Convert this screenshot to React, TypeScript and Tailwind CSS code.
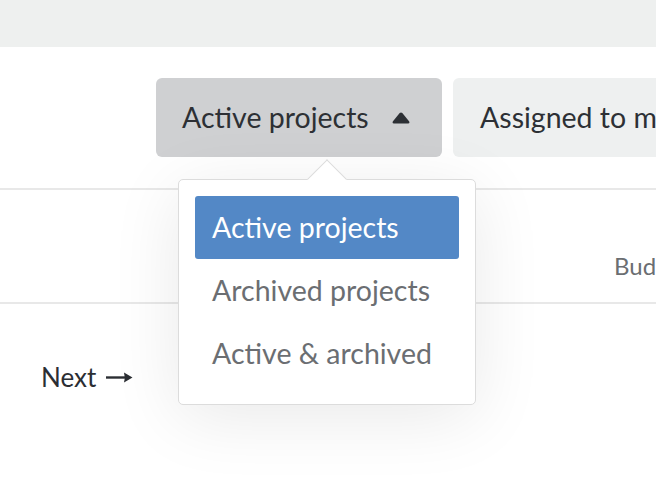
const font = { fontFamily: 'Lato, "Open Sans", sans-serif' }

const options = ['Active projects', 'Archived projects', 'Active & archived']

const App = () => {
  return (
    <div className="relative h-[494px] w-[656px] overflow-hidden bg-white" style={font}>
      <div className="h-[47px] bg-[#eef0ef]" />

      {/* filter toolbar */}
      <div className="flex gap-[11px] whitespace-nowrap pl-[156px] pt-[31px]">
        <button className="flex h-[79px] w-[286px] shrink-0 items-center rounded-[6px] bg-[#cfd0d2] pl-[26px] text-[28.5px] leading-none text-[#2d3035]">
          <span>Active projects</span>
          <svg className="ml-[23px]" width="18" height="12" viewBox="0 0 18 12">
            <path d="M7.7 1.1 Q9 -0.2 10.3 1.1 L17.2 9.6 Q18 11.5 16 11.5 H2 Q0 11.5 0.8 9.6 Z" fill="#2d3035" />
          </svg>
        </button>
        <button className="flex h-[79px] w-[300px] shrink-0 items-center rounded-[6px] bg-[#eef0f0] pl-[27px] text-[28.5px] leading-none text-[#2d3035]">
          Assigned to me
        </button>
      </div>

      {/* table header */}
      <div className="mt-[31px] flex h-[116px] items-end border-y-2 border-[#e8e8e8] pb-[18px] pl-[614px]">
        <span className="whitespace-nowrap text-[24px] text-[#6b6e72]">Budget</span>
      </div>

      <div className="flex items-center gap-[10px] pl-[41px] pt-[54px] text-[26px] text-[#2b2e33]">
        <span>Next</span>
        <svg width="27" height="11" viewBox="0 0 27 11">
          <path d="M0 5.5 H21" stroke="#2b2e33" strokeWidth="2.4" />
          <path d="M18 0.5 L26.5 5.5 L18 10.5 Q19.5 5.5 18 0.5 Z" fill="#2b2e33" />
        </svg>
      </div>

      {/* project scope menu */}
      <div className="absolute left-[178px] top-[179px] w-[298px] rounded-[5px] border border-[#dcdcdc] bg-white px-[16px] pb-[19px] pt-[16px] shadow-[0_12px_70px_rgba(0,0,0,0.09)]">
        <div className="absolute -top-[15px] left-[134px] h-[28px] w-[28px] rotate-45 border-l border-t border-[#dcdcdc] bg-white" />
        <ul className="relative flex flex-col text-[28.5px] leading-none">
          {options.map((o, i) => (
            <li
              key={o}
              className={
                i === 0
                  ? 'flex h-[63px] items-center rounded-[3px] bg-[#5388c6] pl-[17px] text-white'
                  : 'flex h-[63px] items-center pl-[17px] text-[#6b6e72]'
              }
            >
              {o}
            </li>
          ))}
        </ul>
      </div>
    </div>
  )
}

export default App
